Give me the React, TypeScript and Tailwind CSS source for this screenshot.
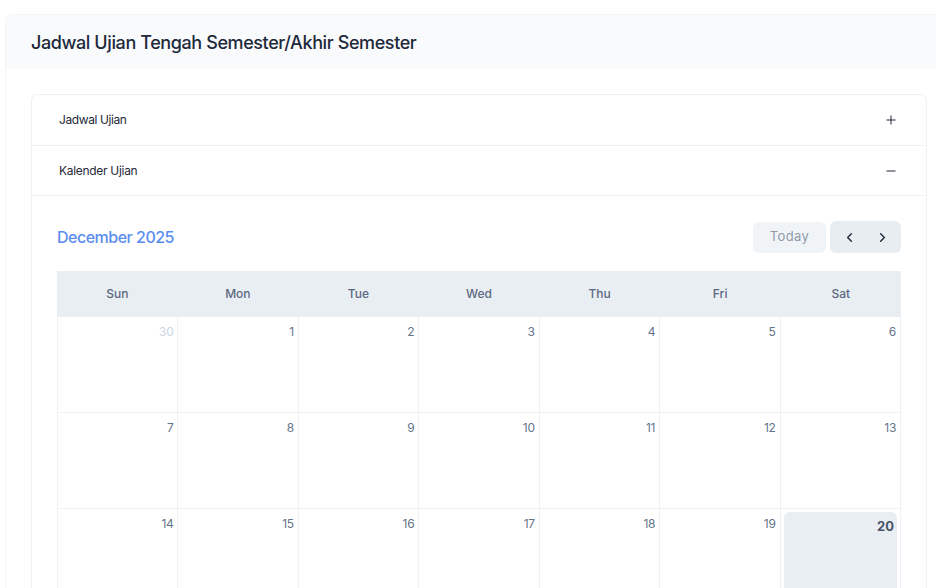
import { Plus, Minus, ChevronLeft, ChevronRight } from 'lucide-react'

const days = ['Sun', 'Mon', 'Tue', 'Wed', 'Thu', 'Fri', 'Sat']

const weeks = [
  [30, 1, 2, 3, 4, 5, 6],
  [7, 8, 9, 10, 11, 12, 13],
  [14, 15, 16, 17, 18, 19, 20],
]

export default function App() {
  return (
    <div
      className="h-[588px] w-[936px] overflow-hidden bg-white pl-[5px] pt-[14px]"
      style={{ fontFamily: 'Inter, "Noto Sans", sans-serif' }}
    >
      <div className="w-[948px] rounded-tl-lg border border-[#f2f4f6] bg-white">
        {/* Header */}
        <div className="flex h-[54px] items-center rounded-tl-lg bg-[#f9fafb] px-[25px]">
          <h1 className="text-[18px] font-medium tracking-[-0.4px] text-[#1e293b]">
            Jadwal Ujian Tengah Semester/Akhir Semester
          </h1>
        </div>

        {/* Body */}
        <div className="px-[25px] pt-[25px]">
          <div className="rounded-md border border-[#eef2f6]">
            <div className="flex h-[51px] items-center justify-between border-b border-[#eef2f6] pl-[27px] pr-[28px]">
              <span className="text-[12px] tracking-[-0.4px] text-[#1f2937]">Jadwal Ujian</span>
              <Plus className="h-[14px] w-[14px] text-[#111827]" strokeWidth={1.6} />
            </div>
            <div className="flex h-[50px] items-center justify-between border-b border-[#eef2f6] pl-[27px] pr-[28px]">
              <span className="text-[12px] tracking-[-0.3px] text-[#1f2937]">Kalender Ujian</span>
              <Minus className="h-[14px] w-[14px] text-[#111827]" strokeWidth={1.6} />
            </div>

            {/* Calendar */}
            <div className="px-[25px] pt-[25px]">
              <div className="flex items-center justify-between">
                <h2 className="text-[16px] font-medium tracking-[-0.5px] text-[#5b8def]">December 2025</h2>
                <div className="flex items-center gap-[4px]">
                  <button className="flex h-[31px] w-[73px] items-center justify-center rounded-md bg-[#f1f4f7] text-[13px] tracking-[0.4px] text-[#8f9aab]">
                    Today
                  </button>
                  <div className="flex h-[32px] w-[71px] items-center justify-center gap-[18px] rounded-md bg-[#e8edf2]">
                    <ChevronLeft className="h-[15px] w-[15px] text-[#1e293b]" strokeWidth={2.2} />
                    <ChevronRight className="h-[15px] w-[15px] text-[#1e293b]" strokeWidth={2.2} />
                  </div>
                </div>
              </div>

              <div className="mt-[18px]">
                <div className="grid h-[46px] grid-cols-7 bg-[#e9eef3]">
                  {days.map((d) => (
                    <div key={d} className="flex items-center justify-center text-[12px] font-medium text-[#5b6880]">
                      {d}
                    </div>
                  ))}
                </div>
                {weeks.map((week, wi) => (
                  <div key={wi} className="grid h-[96px] grid-cols-7 border-b border-l border-[#eef2f6]">
                    {week.map((n, di) => {
                      const muted = wi === 0 && di === 0
                      const today = n === 20
                      return (
                        <div key={di} className="relative border-r border-[#eef2f6]">
                          {today ? (
                            <div className="absolute inset-[3px] rounded-md bg-[#e9eef3]">
                              <div className="pr-[3px] pt-[5px] text-right text-[13px] font-bold text-[#475569]">
                                {n}
                              </div>
                            </div>
                          ) : (
                            <div
                              className={
                                muted
                                  ? 'pr-[4px] pt-[6px] text-right text-[12px] tracking-[-0.3px] text-[#cbd5e1]'
                                  : 'pr-[4px] pt-[6px] text-right text-[12px] tracking-[-0.3px] text-[#64748b]'
                              }
                            >
                              {n}
                            </div>
                          )}
                        </div>
                      )
                    })}
                  </div>
                ))}
              </div>
            </div>
          </div>
        </div>
      </div>
    </div>
  )
}
